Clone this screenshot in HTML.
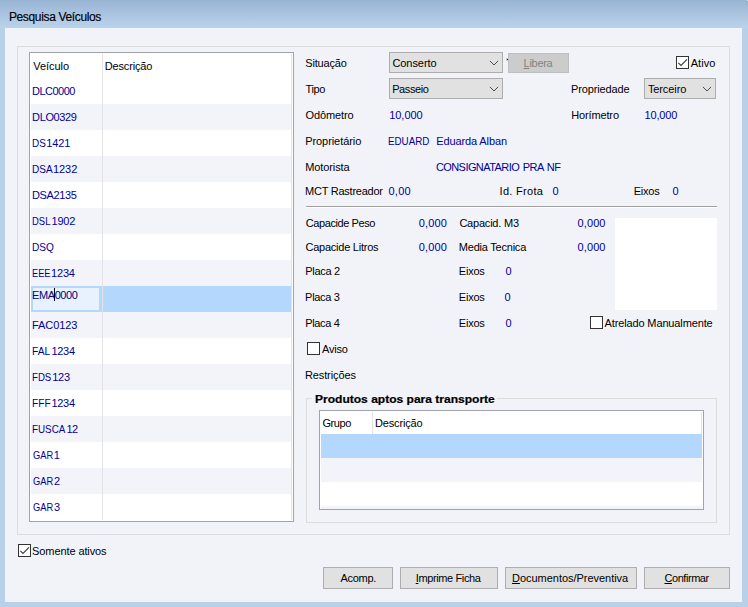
<!DOCTYPE html>
<html><head><meta charset="utf-8"><title>Pesquisa Veículos</title>
<style>
html,body{margin:0;padding:0}
body{width:748px;height:607px;overflow:hidden;position:relative;background:#b9d0e9;font-family:"Liberation Sans",sans-serif;font-size:11px}
div,span,svg{position:absolute;box-sizing:border-box}
.title{left:0;top:0;width:748px;height:28px;background:linear-gradient(to bottom,#99b4d3 0%,#bad3ed 100%)}
.client{left:5px;top:28px;width:737px;height:574px;background:#f2f3f9}
.panel{left:17px;top:46px;width:713px;height:489px;border:1px solid #dcdcdc}
.list{left:29px;top:52px;width:265px;height:470px;border:1px solid #a0a3a9;background:#fff}
.r{left:31px;width:260px;height:26px;background:#f3f4f9}
.t{white-space:nowrap;line-height:16px;height:16px;transform-origin:0 0;color:#000}
.combo{height:21px;border:1px solid #adadad;background:#e1e1e1}
.btn{top:567px;height:22px;border:1px solid #adadad;background:#e1e1e1}
</style></head><body>
<div class="title"></div>
<div style="left:747px;top:0;width:1px;height:1px;background:#c4ecf4"></div>
<div class="client"></div>
<div class="panel"></div>

<div class="list"></div>
<div class="r" style="top:104px"></div><div class="r" style="top:156px"></div><div class="r" style="top:208px"></div><div class="r" style="top:260px"></div><div class="r" style="top:286px;background:#b4d7fd"></div><div class="r" style="top:312px"></div><div class="r" style="top:364px"></div><div class="r" style="top:416px"></div><div class="r" style="top:468px"></div>
<div style="left:33px;top:288px;width:66px;height:22px;background:#e8f2fe"></div>
<div style="left:102px;top:54px;width:1px;height:466px;background:#e3e3e3"></div>
<div style="left:291px;top:54px;width:1px;height:466px;background:#e3e3e3"></div>
<div style="left:54px;top:288px;width:1px;height:13px;background:#000"></div>

<div class="combo" style="left:389px;top:52px;width:114px"></div>
<div class="combo" style="left:389px;top:78px;width:114px"></div>
<div class="combo" style="left:644px;top:78px;width:72px"></div>
<svg class="chev" style="left:489px;top:60px" width="10" height="6" viewBox="0 0 10 6"><path d="M0.9 0.9 L5 5 L9.1 0.9" fill="none" stroke="#444" stroke-width="0.95"/></svg>
<svg class="chev" style="left:489px;top:86px" width="10" height="6" viewBox="0 0 10 6"><path d="M0.9 0.9 L5 5 L9.1 0.9" fill="none" stroke="#444" stroke-width="0.95"/></svg>
<svg class="chev" style="left:702px;top:86px" width="10" height="6" viewBox="0 0 10 6"><path d="M0.9 0.9 L5 5 L9.1 0.9" fill="none" stroke="#444" stroke-width="0.95"/></svg>
<div style="left:507px;top:59px;width:1px;height:1px;background:#222"></div><div style="left:506px;top:58px;width:3px;height:3px;background:rgba(0,0,0,0.18)"></div>
<div style="left:508px;top:53px;width:61px;height:20px;background:#cccccc;border:1px solid #bfbfbf"></div>
<svg style="position:absolute;left:676px;top:56px" width="13" height="13" viewBox="0 0 13 13"><rect x="0.5" y="0.5" width="12" height="12" fill="#fff" stroke="#333"/><path d="M2.3 6.9 L5 9.4 L11 3.4" fill="none" stroke="#3a3a3a" stroke-width="1.15"/></svg>

<div style="left:306px;top:206px;width:411px;height:1px;background:#a0a0a0"></div>
<div style="left:306px;top:207px;width:411px;height:1px;background:#ffffff"></div>
<div style="left:615px;top:218px;width:102px;height:92px;background:#fff"></div>
<svg style="position:absolute;left:590px;top:316px" width="13" height="13" viewBox="0 0 13 13"><rect x="0.5" y="0.5" width="12" height="12" fill="#fff" stroke="#333"/></svg>
<svg style="position:absolute;left:307px;top:342px" width="13" height="13" viewBox="0 0 13 13"><rect x="0.5" y="0.5" width="12" height="12" fill="#fff" stroke="#333"/></svg>

<div style="left:306px;top:398px;width:411px;height:125px;border:1px solid #dcdcdc"></div>
<div style="left:312px;top:396px;width:185px;height:5px;background:#f2f3f9"></div>
<div style="left:319px;top:410px;width:385px;height:100px;border:1px solid #a0a3a9;background:#fff"></div>
<div style="left:321px;top:434px;width:381px;height:24px;background:#b4d7fd"></div>
<div style="left:321px;top:458px;width:381px;height:24px;background:#f3f4f9"></div>
<div style="left:321px;top:506px;width:381px;height:3px;background:#f3f4f9"></div>
<div style="left:372px;top:412px;width:1px;height:22px;background:#e3e3e3"></div>
<div style="left:701px;top:412px;width:1px;height:22px;background:#e3e3e3"></div>

<svg style="position:absolute;left:18px;top:544px" width="13" height="13" viewBox="0 0 13 13"><rect x="0.5" y="0.5" width="12" height="12" fill="#fff" stroke="#333"/><path d="M2.3 6.9 L5 9.4 L11 3.4" fill="none" stroke="#3a3a3a" stroke-width="1.15"/></svg>

<div class="btn" style="left:323px;width:70px"></div>
<div class="btn" style="left:400px;width:98px"></div>
<div class="btn" style="left:505px;width:132px"></div>
<div class="btn" style="left:644px;width:86px"></div>

<span class="t" style="left:8.9px;top:9px;letter-spacing:-0.35px;font-size:12px;-webkit-text-stroke:0.15px #000;">Pesquisa Veículos</span>
<span class="t" style="left:33.3px;top:58px;letter-spacing:-0.05px;">Veículo</span>
<span class="t" style="left:104.8px;top:58px;letter-spacing:-0.17px;">Descrição</span>
<span class="t" style="left:32.1px;top:83px;letter-spacing:-0.54px;color:#00009a;">DLC0000</span>
<span class="t" style="left:32.1px;top:109px;letter-spacing:-0.38px;color:#00009a;">DLO0329</span>
<span class="t" style="left:32.0px;top:135px;transform:scaleX(0.9035);transform-origin:0 0;color:#00009a;">DS</span>
<span class="t" style="left:46.2px;top:135px;letter-spacing:-0.13px;color:#00009a;">1421</span>
<span class="t" style="left:32.0px;top:161px;transform:scaleX(0.9133);transform-origin:0 0;color:#00009a;">DSA</span>
<span class="t" style="left:53.0px;top:161px;letter-spacing:-0.07px;color:#00009a;">1232</span>
<span class="t" style="left:32.0px;top:187px;letter-spacing:-0.39px;color:#00009a;">DSA2135</span>
<span class="t" style="left:32.0px;top:213px;transform:scaleX(0.8595);transform-origin:0 0;color:#00009a;">DSL</span>
<span class="t" style="left:51.5px;top:213px;letter-spacing:-0.20px;color:#00009a;">1902</span>
<span class="t" style="left:32.0px;top:239px;transform:scaleX(0.9186);transform-origin:0 0;color:#00009a;">DSQ</span>
<span class="t" style="left:32.1px;top:265px;transform:scaleX(0.8384);transform-origin:0 0;color:#00009a;">EEE</span>
<span class="t" style="left:51.1px;top:265px;letter-spacing:-0.20px;color:#00009a;">1234</span>
<span class="t" style="left:32.0px;top:287px;letter-spacing:-0.40px;color:#000088;">EMA0000</span>
<span class="t" style="left:32.1px;top:317px;letter-spacing:-0.11px;color:#00009a;">FAC0123</span>
<span class="t" style="left:32.0px;top:343px;transform:scaleX(0.9324);transform-origin:0 0;color:#00009a;">FAL</span>
<span class="t" style="left:51.4px;top:343px;letter-spacing:-0.27px;color:#00009a;">1234</span>
<span class="t" style="left:32.0px;top:369px;transform:scaleX(0.8763);transform-origin:0 0;color:#00009a;">FDS</span>
<span class="t" style="left:52.2px;top:369px;letter-spacing:-0.27px;color:#00009a;">123</span>
<span class="t" style="left:32.0px;top:395px;transform:scaleX(0.9252);transform-origin:0 0;color:#00009a;">FFF</span>
<span class="t" style="left:51.4px;top:395px;letter-spacing:-0.27px;color:#00009a;">1234</span>
<span class="t" style="left:32.0px;top:421px;transform:scaleX(0.8947);transform-origin:0 0;color:#00009a;">FUSCA</span>
<span class="t" style="left:66.4px;top:421px;letter-spacing:-0.42px;color:#00009a;">12</span>
<span class="t" style="left:32.5px;top:447px;transform:scaleX(0.8459);transform-origin:0 0;color:#00009a;">GAR</span>
<span class="t" style="left:53.8px;top:447px;color:#00009a;">1</span>
<span class="t" style="left:32.5px;top:473px;transform:scaleX(0.8459);transform-origin:0 0;color:#00009a;">GAR</span>
<span class="t" style="left:54.1px;top:473px;color:#00009a;">2</span>
<span class="t" style="left:32.5px;top:499px;transform:scaleX(0.8459);transform-origin:0 0;color:#00009a;">GAR</span>
<span class="t" style="left:54.0px;top:499px;color:#00009a;">3</span>
<span class="t" style="left:305.3px;top:55px;letter-spacing:-0.19px;">Situação</span>
<span class="t" style="left:305.6px;top:81px;letter-spacing:-0.38px;">Tipo</span>
<span class="t" style="left:305.6px;top:107px;letter-spacing:-0.12px;">Odômetro</span>
<span class="t" style="left:305.2px;top:133px;letter-spacing:-0.07px;">Proprietário</span>
<span class="t" style="left:305.2px;top:159px;letter-spacing:-0.09px;">Motorista</span>
<span class="t" style="left:305.1px;top:183px;letter-spacing:-0.25px;">MCT Rastreador</span>
<span class="t" style="left:305.7px;top:215px;letter-spacing:-0.40px;">Capacide Peso</span>
<span class="t" style="left:305.5px;top:239px;letter-spacing:-0.24px;">Capacide Litros</span>
<span class="t" style="left:305.2px;top:263px;letter-spacing:-0.29px;">Placa 2</span>
<span class="t" style="left:305.1px;top:289px;letter-spacing:-0.30px;">Placa 3</span>
<span class="t" style="left:305.2px;top:315px;letter-spacing:-0.33px;">Placa 4</span>
<span class="t" style="left:322.0px;top:341px;letter-spacing:-0.20px;">Aviso</span>
<span class="t" style="left:304.9px;top:367px;letter-spacing:-0.10px;">Restrições</span>
<span class="t" style="left:314.7px;top:391px;transform:scaleX(1.0934);transform-origin:0 0;-webkit-text-stroke:0.2px #000;font-weight:bold;">Produtos aptos para transporte</span>
<span class="t" style="left:322.4px;top:415px;letter-spacing:-0.38px;">Grupo</span>
<span class="t" style="left:375.1px;top:415px;letter-spacing:-0.18px;">Descrição</span>
<span class="t" style="left:571.0px;top:81px;letter-spacing:-0.13px;">Propriedade</span>
<span class="t" style="left:571.3px;top:107px;letter-spacing:-0.15px;">Horímetro</span>
<span class="t" style="left:690.7px;top:55px;letter-spacing:0.08px;">Ativo</span>
<span class="t" style="left:499.6px;top:183px;letter-spacing:0.29px;">Id. Frota</span>
<span class="t" style="left:633.7px;top:183px;letter-spacing:-0.21px;">Eixos</span>
<span class="t" style="left:459.4px;top:215px;letter-spacing:-0.21px;">Capacid. M3</span>
<span class="t" style="left:458.8px;top:239px;letter-spacing:-0.22px;">Media Tecnica</span>
<span class="t" style="left:458.8px;top:263px;letter-spacing:-0.21px;">Eixos</span>
<span class="t" style="left:505.4px;top:263px;color:#00009a;">0</span>
<span class="t" style="left:458.8px;top:289px;letter-spacing:-0.21px;">Eixos</span>
<span class="t" style="left:504.4px;top:289px;color:#00009a;">0</span>
<span class="t" style="left:458.8px;top:315px;letter-spacing:-0.21px;">Eixos</span>
<span class="t" style="left:505.4px;top:315px;color:#00009a;">0</span>
<span class="t" style="left:604.5px;top:315px;letter-spacing:-0.13px;">Atrelado Manualmente</span>
<span class="t" style="left:32.1px;top:543px;letter-spacing:-0.10px;">Somente ativos</span>
<span class="t" style="left:392.4px;top:55px;letter-spacing:-0.06px;">Conserto</span>
<span class="t" style="left:392.2px;top:81px;letter-spacing:-0.40px;">Passeio</span>
<span class="t" style="left:647.9px;top:81px;letter-spacing:-0.10px;">Terceiro</span>
<span class="t" style="left:340.4px;top:570px;letter-spacing:-0.27px;">Acomp.</span>
<span class="t" style="left:415.7px;top:570px;letter-spacing:-0.37px;"><u>I</u>mprime Ficha</span>
<span class="t" style="left:512.0px;top:570px;letter-spacing:-0.03px;"><u>D</u>ocumentos/Preventiva</span>
<span class="t" style="left:664.5px;top:570px;letter-spacing:-0.45px;"><u>C</u>onfirmar</span>
<span class="t" style="left:523.6px;top:55px;letter-spacing:-0.30px;color:#838383;"><u>L</u>ibera</span>
<span class="t" style="left:389.2px;top:107px;letter-spacing:-0.03px;color:#00009a;">10,000</span>
<span class="t" style="left:644.5px;top:107px;letter-spacing:-0.18px;color:#00009a;">10,000</span>
<span class="t" style="left:388.2px;top:133px;transform:scaleX(0.8895);transform-origin:0 0;color:#00009a;">EDUARD</span>
<span class="t" style="left:436.3px;top:133px;letter-spacing:-0.12px;color:#00009a;">Eduarda Alban</span>
<span class="t" style="left:435.9px;top:159px;letter-spacing:-0.57px;word-spacing:1.2px;color:#00009a;">CONSIGNATARIO PRA NF</span>
<span class="t" style="left:388.4px;top:183px;letter-spacing:0.30px;color:#00009a;">0,00</span>
<span class="t" style="left:552.4px;top:183px;color:#00009a;">0</span>
<span class="t" style="left:672.4px;top:183px;color:#00009a;">0</span>
<span class="t" style="left:418.7px;top:215px;letter-spacing:0.19px;color:#00009a;">0,000</span>
<span class="t" style="left:577.6px;top:215px;letter-spacing:0.09px;color:#00009a;">0,000</span>
<span class="t" style="left:418.7px;top:239px;letter-spacing:0.19px;color:#00009a;">0,000</span>
<span class="t" style="left:577.6px;top:239px;letter-spacing:0.09px;color:#00009a;">0,000</span>
</body></html>
